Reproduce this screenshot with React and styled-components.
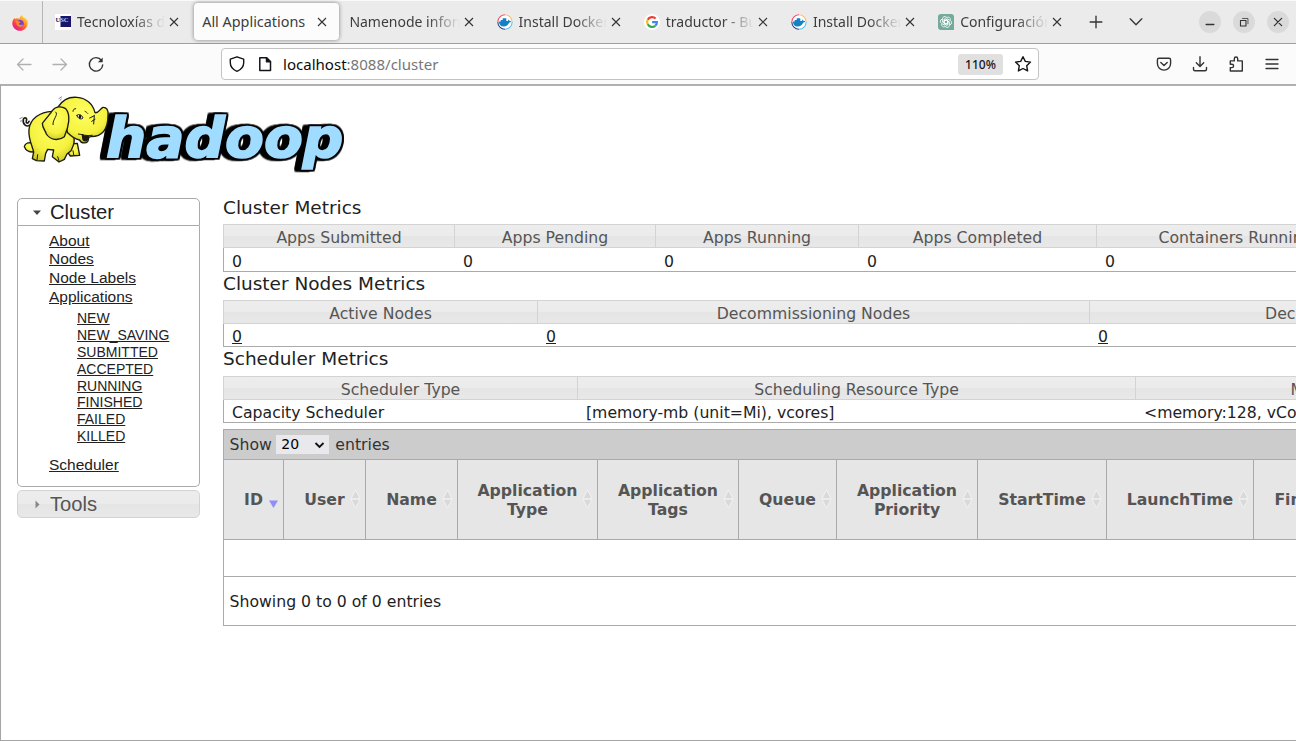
import React from "react";
import styled, { createGlobalStyle, css } from "styled-components";

const Global = createGlobalStyle`
  * { box-sizing: border-box; }
  html, body { margin: 0; padding: 0; background: #fff; overflow: hidden; }
`;

const Window = styled.div`
  width: 1296px;
  height: 741px;
  display: flex;
  flex-direction: column;
  overflow: hidden;
  font-family: "DejaVu Sans", sans-serif;
  color: #222;
`;

/* ---------- browser chrome ---------- */

const TabBar = styled.div`
  height: 44px;
  flex: none;
  display: flex;
  background: #ebebeb;
  border-top: 1px solid #fafafa;
  border-bottom: 1px solid #a0a0a0;
  font-family: "Noto Sans", sans-serif;
`;

const PinnedTab = styled.div`
  width: 43px;
  padding: 13px 0 0 12px;
  border-right: 1px solid #b6b6b6;
  margin-right: 2px;
`;

const Tab = styled.div`
  width: 147.2px;
  flex: none;
  display: flex;
  align-items: center;
  padding: 0 9px 0 10px;
  height: 42px;
  ${(p) =>
    p.$active &&
    css`
      height: 37px;
      width: 145.2px;
      margin: 2px 0.5px 0 1.500px;
      padding: 0 7.500px 0 8.500px;
      background: #fcfcfc;
      border-radius: 4px;
      box-shadow: 0 0 4px rgba(0, 0, 0, 0.45);
    `}
`;

const Favicon = styled.svg`
  width: 16px;
  height: 16px;
  flex: none;
  margin-right: 6px;
`;

const TabTitle = styled.span`
  flex: 1;
  min-width: 0;
  overflow: hidden;
  white-space: nowrap;
  font-size: ${(p) => (p.$full ? 14.4 : 14)}px;
  line-height: 20px;
  color: #3d3d3d;
  ${(p) =>
    !p.$full &&
    css`
      mask-image: linear-gradient(to left, transparent 0, #000 32px);
    `}
`;

const CloseMark = styled.svg`
  width: 18px;
  height: 18px;
  flex: none;
`;

const TabTools = styled.div`
  display: flex;
  align-items: center;
  gap: 22px;
  padding-left: 12px;
`;

const WindowButtons = styled.div`
  display: flex;
  align-items: center;
  gap: 12px;
  margin-left: auto;
  padding-right: 7px;
`;

const RoundButton = styled.span`
  width: 22px;
  height: 22px;
  border-radius: 50%;
  background: #dadada;
  display: flex;
`;

const ToolBar = styled.div`
  height: 40px;
  flex: none;
  display: flex;
  align-items: center;
  background: #fbfbfb;
`;

const NavButtons = styled.div`
  display: flex;
  gap: 16px;
  width: 221px;
  padding-left: 14px;
`;

const AddressBox = styled.div`
  width: 818px;
  height: 32px;
  border: 1px solid #c3c3c3;
  border-radius: 4px;
  background: #fff;
  display: flex;
  align-items: center;
  padding: 0 5px;
`;

const Address = styled.span`
  flex: 1;
  font: 15.050px/20px "Noto Sans", sans-serif;
  color: #777;
  b {
    font-weight: 400;
    color: #0c0c0d;
  }
`;

const ZoomBadge = styled.span`
  width: 45px;
  height: 21px;
  border-radius: 3px;
  background: #e0e0e0;
  font: 500 12px/21px "Noto Sans", sans-serif;
  text-align: center;
  color: #15141a;
  margin-right: 10px;
`;

const Actions = styled.div`
  display: flex;
  gap: 16px;
  margin-left: auto;
  padding-right: 14px;
`;

const Icon = ({ size = 20, color = "#333", children, w = 1.3 }) => (
  <svg
    width={size}
    height={size}
    viewBox="0 0 20 20"
    fill="none"
    stroke={color}
    strokeWidth={w}
    strokeLinecap="round"
    strokeLinejoin="round"
  >
    {children}
  </svg>
);

const PageIcon = styled.svg`
  width: 20px;
  height: 20px;
  margin: 0 7px 0 9px;
`;

const Docker = () => (
  <Favicon viewBox="0 0 16 16">
    <circle cx="8" cy="8" r="7.9" fill="#fff" />
    <g fill="none" strokeWidth="1.1">
      <path d="M.8 8A7.2 7.2 0 0 1 8 .8" stroke="#f0506a" />
      <path d="M8 .8A7.2 7.2 0 0 1 15.2 8" stroke="#f9bd62" />
      <path d="M15.2 8A7.2 7.2 0 0 1 8 15.2" stroke="#58bde0" />
      <path d="M8 15.2A7.2 7.2 0 0 1 .8 8" stroke="#263f7c" />
    </g>
    <path
      d="M2 7.400h1.700V6h2V4.300h3.600V7h1.300c.6-.1.900-.5.800-1.500.8.300 1.100.9 1.100 1.500.7-.2 1.300 0 1.700.3-.4.9-1.100 1.200-2 1.200-1 2.700-3 4-5.500 4C3.700 12.500 1.900 10.500 2 7.400z"
      fill="#1580c4"
    />
  </Favicon>
);

const Google = () => (
  <Favicon viewBox="0 0 16 16">
    <circle cx="8" cy="8" r="8" fill="#fff" />
    <g fill="none" strokeWidth="2.200">
      <path d="M11.600 4.600A4.900 4.900 0 0 0 3.700 5.700" stroke="#ea4335" />
      <path d="M3.700 5.700a4.900 4.900 0 0 0 0 4.600" stroke="#fbbc05" />
      <path d="M3.700 10.300a4.900 4.900 0 0 0 7.600 1.400" stroke="#34a853" />
      <path d="M11.300 11.700C12.300 10.900 12.900 9.600 12.900 8.200H8.100" stroke="#4285f4" />
    </g>
  </Favicon>
);

const OpenAI = () => (
  <Favicon viewBox="0 0 16 16">
    <path d="M3 0h10a3 3 0 0 1 3 3v13H3a3 3 0 0 1-3-3V3a3 3 0 0 1 3-3z" fill="#74aa9c" />
    <g fill="none" stroke="#fff" strokeWidth=".75">
      {[0, 60, 120, 180, 240, 300].map((r) => (
        <path key={r} transform={`rotate(${r} 8 8)`} d="M6.200 9V5.100L9 3.400a2.300 2.300 0 0 1 3.400 2.500M6.200 6.900 8 5.900l3.200 1.900" />
      ))}
    </g>
  </Favicon>
);

const Usc = () => (
  <Favicon viewBox="0 0 16 16">
    <rect width="16" height="16" fill="#fff" />
    <rect x="5.500" y="2" width="10.500" height="11" fill="#16166b" />
    <text x="0.500" y="7.500" fontFamily="Liberation Serif" fontWeight="700" fontSize="6.500" fill="#16166b">
      U<tspan fill="#c9c9ef">SC</tspan>
    </text>
  </Favicon>
);

const Firefox = () => (
  <svg width="16" height="16" viewBox="0 0 16 16">
    <defs>
      <linearGradient id="fox" x1=".85" y1=".1" x2=".2" y2=".9">
        <stop offset="0" stopColor="#ffe14a" />
        <stop offset=".4" stopColor="#ff8a1e" />
        <stop offset=".75" stopColor="#ff3850" />
        <stop offset="1" stopColor="#e0208a" />
      </linearGradient>
    </defs>
    <path
      d="M10 0c.3 1.600 1.400 2.300 2.400 3.300.3-.3.300-.6.200-.9C14.700 3.700 15.900 6 15.700 8.500 15.400 12.600 12 15.800 8 15.800S.3 12.600.3 8.500C.3 6.300 1.200 4.300 2.600 2.800c0 .5.100.9.400 1.300C3.600 3.500 4.400 3.200 5.200 3.200 6 3.200 7 3.500 7.500 3.700 7.800 2.200 8.700.8 10 0z"
      fill="url(#fox)"
    />
    <circle cx="8.200" cy="8.600" r="3.500" fill="#7a3be0" />
    <path d="M3.300 6.200c1.300-.9 2.600-.4 3.600.4l1.800.3c-.2.900-1.600 1-1.800 1.700-.2 1 1 1.600 2.200 1.200 1.200-.4 2.400.2 1.700 1-1 1.300-3.500 1.600-5 .3C4.300 10 4.300 7.500 3.300 6.200z" fill="#ff8a1e" />
  </svg>
);

const tabs = [
  { title: "Tecnoloxías de", icon: Usc },
  { title: "All Applications", active: true },
  { title: "Namenode information" },
  { title: "Install Docker Engine", icon: Docker },
  { title: "traductor - Buscar", icon: Google },
  { title: "Install Docker Engine", icon: Docker },
  { title: "Configuración de", icon: OpenAI },
];

/* ---------- page ---------- */

const Page = styled.div`
  flex: 1;
  min-height: 0;
  display: flex;
  flex-direction: column;
  background: #fff;
  border: 1px solid #a5a5a5;
  border-top: 2px solid #b0b0b0;
  border-right: 0;
  overflow: hidden;
`;

const Header = styled.header`
  height: 112px;
  flex: none;
  padding: 9px 0 0 15px;
`;

const Columns = styled.div`
  display: flex;
  padding-left: 16px;
`;

const Sidebar = styled.nav`
  width: 183px;
  flex: none;
  margin-right: 23px;
  font-family: "Liberation Sans", sans-serif;
`;

const Section = styled.div`
  height: 28px;
  display: flex;
  align-items: center;
  padding-left: 15px;
  gap: 8px;
  font-size: 20.200px;
  border: 1px solid ${(p) => (p.$open ? "#aaa" : "#d3d3d3")};
  border-radius: ${(p) => (p.$open ? "5px 5px 0 0" : "5px")};
  color: ${(p) => (p.$open ? "#212121" : "#555")};
  background: ${(p) => (p.$open ? "#fff" : "linear-gradient(#ededed 0, #ebebeb 50%, #e5e5e5 50%, #e8e8e8 100%)")};
`;

const Arrow = styled.svg`
  width: 9px;
  height: 9px;
`;

const Links = styled.div`
  height: 261px;
  border: 1px solid #aaa;
  border-top: 0;
  border-radius: 0 0 5px 5px;
  padding: 5.500px 0 0 31px;
  margin-bottom: 3px;
`;

const NavLink = styled.a`
  display: block;
  width: max-content;
  font-size: 15.500px;
  line-height: 18.700px;
  text-decoration: underline;
  color: #222;
`;

const SubLinks = styled.div`
  padding: 4px 0 11.500px 28px;
  ${NavLink} {
    font-size: 14px;
    line-height: 16.800px;
  }
`;

const Main = styled.main`
  flex: 1;
  min-width: 0;
  overflow: hidden;
`;

const Title = styled.h3`
  margin: 0;
  height: ${(p) => p.$h}px;
  font-size: 18.480px;
  font-weight: 400;
  line-height: ${(p) => p.$lh}px;
`;

const Metrics = styled.div`
  display: grid;
  width: max-content;
  grid-template-columns: ${(p) => p.$cols};
  grid-template-rows: 24px ${(p) => p.$row}px;
  font-size: 15.700px;
  white-space: nowrap;
`;

const MetricHead = styled.div`
  border: 1px solid #d3d3d3;
  border-right: 0;
  background: linear-gradient(#ededed 0, #ebebeb 50%, #e5e5e5 50%, #e8e8e8 100%);
  color: #555;
  text-align: center;
  line-height: 26px;
`;

const MetricCell = styled.div`
  border-bottom: 1px solid #aaa;
  padding-left: 9px;
  line-height: ${(p) => p.$lh}px;
  text-decoration: ${(p) => (p.$link ? "underline" : "none")};
  &:nth-child(${(p) => p.$first}) {
    border-left: 1px solid #aaa;
    padding-left: 8px;
  }
`;

const AppTable = styled.section`
  width: 1500px;
  margin-top: 6px;
  border: 1px solid #aaa;
  font-size: 15.700px;
`;

const LengthBar = styled.div`
  height: 30px;
  display: flex;
  align-items: center;
  padding-left: 5.500px;
  background: #ccc;
  border-bottom: 1px solid #aaa;
  color: #333;
`;

const Select = styled.span`
  width: 53px;
  height: 19px;
  margin: 0 6px 0 4.500px;
  padding: 0 4px 0 5px;
  background: #e9e9ed;
  color: #000;
  font-size: 14px;
  line-height: 19px;
  display: flex;
  align-items: center;
  justify-content: space-between;
`;

const HeadRow = styled.div`
  height: 80px;
  display: flex;
  background: #e6e6e6;
  border-bottom: 1px solid #aaa;
`;

const HeadCell = styled.div`
  position: relative;
  width: ${(p) => p.$w}px;
  flex: none;
  display: flex;
  align-items: center;
  justify-content: center;
  text-align: center;
  white-space: pre-line;
  font-weight: 700;
  line-height: 19px;
  padding-top: ${(p) => (p.$single ? 0 : 1)}px;
  padding-bottom: ${(p) => (p.$single ? 1 : 0)}px;
  color: #555;
  border-right: 1px solid #aaa;
`;

const Sorter = styled.svg`
  position: absolute;
  right: 4.500px;
  top: 29px;
  width: 11px;
  height: 20px;
`;

const EmptyRow = styled.div`
  height: 37px;
  border-bottom: 1px solid #aaa;
`;

const Info = styled.div`
  height: 48px;
  padding-left: 5.500px;
  line-height: 50px;
`;

const Wordmark = styled.text`
  font: italic 700 168px "DejaVu Sans", sans-serif;
  fill: #a0dcff;
  stroke: #a0dcff;
  stroke-width: 5px;
  stroke-linejoin: miter;
  stroke-miterlimit: 3;
  filter: drop-shadow(5px 0 0 #000) drop-shadow(-5px 0 0 #000) drop-shadow(0 5px 0 #000)
    drop-shadow(0 -5px 0 #000) drop-shadow(-15px 1px 0 #000);
`;

const Logo = () => (
  <svg width="330" height="80" viewBox="48 33 990 240">
    <defs>
      <radialGradient id="hide" cx=".5" cy=".35" r=".7">
        <stop offset="0" stopColor="#ffff62" />
        <stop offset=".65" stopColor="#f5f23f" />
        <stop offset="1" stopColor="#c9c524" />
      </radialGradient>
    </defs>
    <Wordmark x="318" y="219" textLength="712" lengthAdjust="spacingAndGlyphs">hadoop</Wordmark>
    <g stroke="#1b1b12" strokeWidth="4" strokeLinejoin="round" strokeLinecap="round" fill="url(#hide)" transform="translate(-3 0)">
      <path d="M92 124C82 130 70 120 73 106C76 98 86 102 82 110M90 112C86 120 80 118 82 110" fill="none" strokeWidth="5" />
      <path d="M212 180L235 178L242 214L214 216L200 196Z" />
      <path d="M94 176C86 176 78 180 76 188C80 198 90 204 102 204L116 180Z" />
      <path d="M160 82C122 84 94 104 90 136C87 164 100 186 104 204L100 224L112 230L136 231L140 208L146 196L164 198L160 218L180 234L196 226L204 210L216 200C222 186 230 176 224 158L204 96Z" />
      <path d="M178 68C192 46 212 38 234 40C262 42 282 60 288 86C300 88 302 74 312 70C322 69 329 78 327 94C327 126 316 158 276 158C270 158 268 160 268 166C268 180 246 180 242 168C232 166 220 160 206 146Z" />
      <path d="M160 80C170 66 188 66 200 74C216 92 210 128 196 158C178 172 154 168 142 150C140 140 130 134 130 118C138 108 150 94 160 80Z" />
      <path d="M250 152C258 160 268 154 268 156C268 172 256 174 252 166Z" fill="#1b1b12" />
      <path d="M238 150C248 150 262 158 280 154M222 82C222 76 226 74 230 74M258 82C262 84 264 86 266 88M272 102L284 96M278 112L288 106M286 94L284 120M170 84C180 92 160 106 162 122M116 212L114 228M176 218L180 230M222 200L224 212" fill="none" strokeWidth="3" />
      <path d="M234 94C240 88 250 94 252 102C246 108 236 104 234 94Z" fill="#fff" strokeWidth="3" />
      <ellipse cx="243" cy="98" rx="4" ry="6" fill="#1b1b12" stroke="none" />
    </g>
    <path d="M176 44L186 38M180 50L184 44M58 104L68 100M62 114L64 108" stroke="#777" strokeWidth="2.500" />
  </svg>
);

const Sort = ({ active }) => (
  <Sorter viewBox="0 0 11 20">
    {active ? (
      <path d="M1 11.500h9L5.500 19z" fill="#8f8ffc" />
    ) : (
      <g fill="#d9d9d9" stroke="#f3f3f3" strokeWidth=".9">
        <path d="M5.500 1 10 9.800H1z" />
        <path d="M5.500 19 10 10.200H1z" />
      </g>
    )}
  </Sorter>
);

const metricTables = [
  {
    title: "Cluster Metrics", h: 26, lh: 20, row: 24, cellLh: 28, cols: "231px 201px 203px 238px 278px",
    heads: ["Apps Submitted", "Apps Pending", "Apps Running", "Apps Completed", "Containers Running"],
    cells: ["0", "0", "0", "0", "0"],
  },
  {
    title: "Cluster Nodes Metrics", h: 28, lh: 24, row: 23, cellLh: 26, cols: "314px 552px 540px", link: true,
    heads: ["Active Nodes", "Decommissioning Nodes", "Decommissioned Nodes"],
    cells: ["0", "0", "0"],
  },
  {
    title: "Scheduler Metrics", h: 29, lh: 24, row: 23, cellLh: 26, cols: "354px 558px 465px",
    heads: ["Scheduler Type", "Scheduling Resource Type", "Minimum Allocation"],
    cells: ["Capacity Scheduler", "[memory-mb (unit=Mi), vcores]", "<memory:128, vCores:1>"],
  },
];

const appColumns = [
  ["ID", 60], ["User", 82], ["Name", 92], ["Application\nType", 140], ["Application\nTags", 141],
  ["Queue", 98], ["Application\nPriority", 141], ["StartTime", 129], ["LaunchTime", 147], ["FinishTime", 138],
];

const states = ["NEW", "NEW_SAVING", "SUBMITTED", "ACCEPTED", "RUNNING", "FINISHED", "FAILED", "KILLED"];

export default function App() {
  return (
    <Window>
      <Global />
      <TabBar>
        <PinnedTab><Firefox /></PinnedTab>
        {tabs.map((t, i) => (
          <Tab key={i} $active={t.active}>
            {t.icon && <t.icon />}
            <TabTitle $full={t.active}>{t.title}</TabTitle>
            <CloseMark viewBox="0 0 18 18" stroke="#333" strokeWidth="1.100">
              <path d="M5 5l8 8M13 5l-8 8" />
            </CloseMark>
          </Tab>
        ))}
        <TabTools>
          <Icon size={18} w={1.500}><path d="M10 3.500v13M3.500 10h13" /></Icon>
          <Icon size={18} w={1.500}><path d="M3.500 6.500 10 13l6.500-6.500" /></Icon>
        </TabTools>
        <WindowButtons>
          <RoundButton><Icon size={22} w={1.200}><path d="M6.500 12.300h7" /></Icon></RoundButton>
          <RoundButton><Icon size={22} w={1}><path d="M6.800 8.600h5v5h-5z" /><path d="M8.600 6.800h5v4.800" strokeWidth=".7" /></Icon></RoundButton>
          <RoundButton><Icon size={22} w={1.200}><path d="M6.700 6.700l6.600 6.600M13.300 6.700l-6.600 6.600" /></Icon></RoundButton>
        </WindowButtons>
      </TabBar>
      <ToolBar>
        <NavButtons>
          <Icon color="#b0b0b0"><path d="M17 10.500H3.500M9 5l-5.500 5.500L9 16" /></Icon>
          <Icon color="#b0b0b0"><path d="M3 10.500h13.500M11 5l5.500 5.500L11 16" /></Icon>
          <Icon w={1.400}><path d="M15.500 6.500A6.700 6.700 0 1 0 16.700 11" /><path d="M16.700 3.500v4.800h-4.800z" fill="#333" stroke="none" /></Icon>
        </NavButtons>
        <AddressBox>
          <Icon w={1.400} color="#15141a"><path d="M10 2.800 16.700 5.200v3.600c0 3.700-3 7-6.700 8.500-3.700-1.500-6.700-4.800-6.700-8.500V5.200z" /></Icon>
          <PageIcon viewBox="0 0 20 20" fill="none" stroke="#15141a" strokeWidth="1.500" strokeLinejoin="round">
            <path d="M3.800 3.800h6.700l4 4v8.700H3.800z" />
            <path d="M10.500 3.800v4h4z" fill="#15141a" />
          </PageIcon>
          <Address><b>localhost</b>:8088/cluster</Address>
          <ZoomBadge>110%</ZoomBadge>
          <Icon w={1.400} color="#15141a"><path d="M10 2.700l2.300 4.700 5.200.7-3.800 3.600.9 5.200L10 14.500l-4.600 2.400.9-5.200L2.500 8.100l5.200-.7z" /></Icon>
        </AddressBox>
        <Actions>
          <Icon w={1.400}><path d="M5 4.300h10a1.600 1.600 0 0 1 1.600 1.600v3.600a6.600 6.600 0 0 1-13.200 0V5.900A1.600 1.600 0 0 1 5 4.300zM6.800 8.500 10 11.500l3.200-3" /></Icon>
          <Icon w={1.400}><path d="M10 2.800v9.500M6.300 8.800l3.700 3.700 3.700-3.700M3.500 13.500v1.700c0 1 .6 1.500 1.500 1.500h10c.9 0 1.500-.5 1.500-1.500v-1.700" /></Icon>
          <Icon w={1.400}><path d="M4.300 17v-3.400h1.600a1.700 1.700 0 0 0 0-3.400H4.300V6.900h4V4.700a1.700 1.700 0 0 1 3.400 0v2.200h4.600V17z" /></Icon>
          <Icon w={1.300}><path d="M4 5.500h12M4 10h12M4 14.500h12" /></Icon>
        </Actions>
      </ToolBar>
      <Page>
        <Header><Logo /></Header>
        <Columns>
          <Sidebar>
            <Section $open>
              <Arrow viewBox="0 0 9 9"><path d="M0 2.500h8L4 7z" fill="#454545" /></Arrow>
              Cluster
            </Section>
            <Links>
              {["About", "Nodes", "Node Labels", "Applications"].map((l) => <NavLink key={l}>{l}</NavLink>)}
              <SubLinks>{states.map((s) => <NavLink key={s}>{s}</NavLink>)}</SubLinks>
              <NavLink>Scheduler</NavLink>
            </Links>
            <Section>
              <Arrow viewBox="0 0 9 9"><path d="M2.500 0.500v8L6.500 4.500z" fill="#888" /></Arrow>
              Tools
            </Section>
          </Sidebar>
          <Main>
            {metricTables.map((t) => (
              <React.Fragment key={t.title}>
                <Title $h={t.h} $lh={t.lh}>{t.title}</Title>
                <Metrics $cols={t.cols} $row={t.row}>
                  {t.heads.map((h) => <MetricHead key={h}>{h}</MetricHead>)}
                  {t.cells.map((c, i) => (
                    <MetricCell key={i} $lh={t.cellLh} $link={t.link} $first={t.heads.length + 1}>{c}</MetricCell>
                  ))}
                </Metrics>
              </React.Fragment>
            ))}
            <AppTable>
              <LengthBar>
                Show
                <Select>
                  20
                  <svg width="11" height="8" viewBox="0 0 11 8" fill="none" stroke="#111" strokeWidth="1.800"><path d="M1.500 2l4 4 4-4" /></svg>
                </Select>
                entries
              </LengthBar>
              <HeadRow>
                {appColumns.map(([name, w], i) => (
                  <HeadCell key={name} $w={w} $single={!name.includes("\n")}>{name}<Sort active={i === 0} /></HeadCell>
                ))}
              </HeadRow>
              <EmptyRow />
              <Info>Showing 0 to 0 of 0 entries</Info>
            </AppTable>
          </Main>
        </Columns>
      </Page>
    </Window>
  );
}
